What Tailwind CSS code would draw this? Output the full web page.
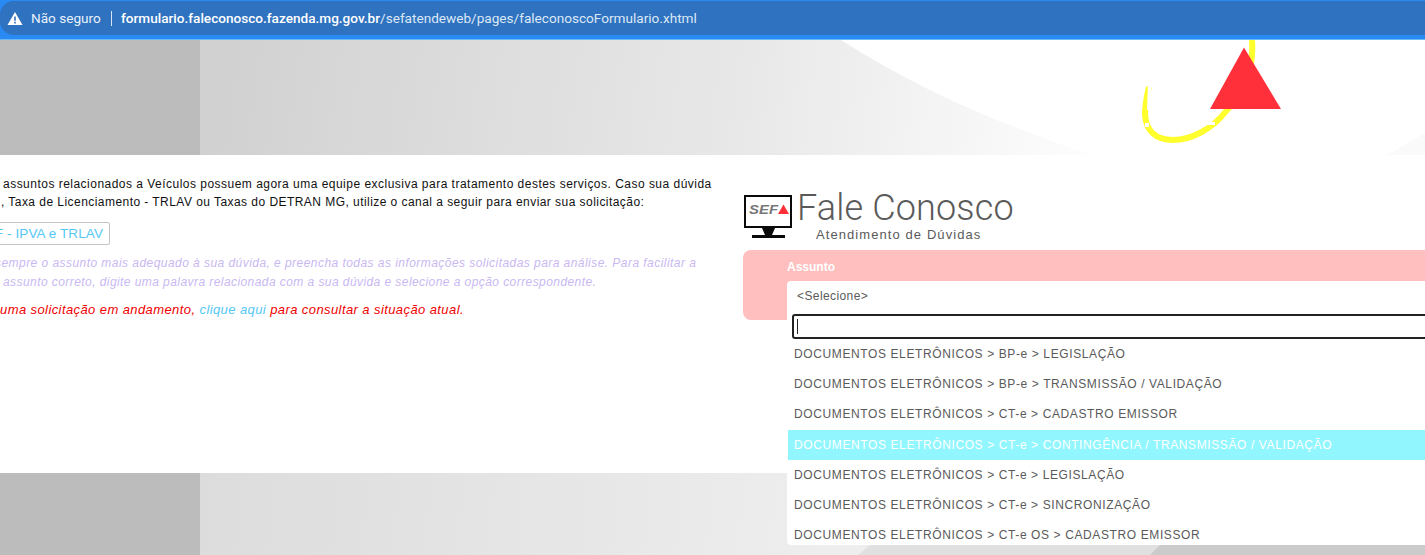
<!DOCTYPE html>
<html lang="pt-BR">

<head>
    <meta charset="UTF-8">
    <title>Fale Conosco</title>
    <script src="https://cdn.jsdelivr.net/npm/@tailwindcss/browser@4"></script>
</head>

<body class="bg-white">
    <div class="h-[555px] w-[1425px] overflow-hidden font-['Liberation_Sans',sans-serif]">
        <!-- browser address bar -->
        <div class="h-[40px] bg-[#2a8af3] pt-px border-b border-[#6bb8f5]">
            <div class="flex h-[34px] items-center rounded-l-[14px] bg-[#2f72bf] pl-[7px] text-[13.6px] text-white font-['Roboto',sans-serif]">
                <svg class="h-[15px] w-[16px]" viewBox="0 0 16 15"><path fill="#fff" d="M8 1 15.5 14H.5Z"/><path fill="#2f72bf" d="M7.2 5.4h1.6v4.4H7.2zM7.2 10.8h1.6v1.6H7.2z"/></svg>
                <span class="ml-2 w-[72px] whitespace-nowrap text-[#e8f1fb]">Não seguro</span>
                <span class="ml-[8px] h-[15px] w-px bg-white/80"></span>
                <span class="ml-[9px] font-medium">formulario.faleconosco.fazenda.mg.gov.br<span class="font-normal text-[#dce8f6]">/sefatendeweb/pages/faleconoscoFormulario.xhtml</span></span>
            </div>
        </div>

        <!-- faixa superior -->
        <div class="flex h-[115px]">
            <div class="w-[200px] bg-[#bcbcbc]"></div>
            <svg class="h-[115px] w-[1225px]" viewBox="0 0 1225 115">
                <defs>
                    <linearGradient id="topo" x1="0" y1="0" x2="900" y2="120" gradientUnits="userSpaceOnUse">
                        <stop offset="0" stop-color="#d0d0d0"/>
                        <stop offset="0.6" stop-color="#e8e8e8"/>
                        <stop offset="1" stop-color="#fefefe"/>
                    </linearGradient>
                </defs>
                <path fill="url(#topo)" d="M0 0H641C720 50 800 85 893 115H0Z"/>
                <path fill="#fafafa" d="M1225 93V115H1187Z"/>
                <path fill="none" stroke="#ffff2e" stroke-width="6" d="M1052 0C1054 28 1045 52 1027 70C1012 90 990 100 973 100C955 100 946 90 945 75C945 65 947 55 949 47"/>
                <path fill="#fff" d="M948 44h4l-3 26h-2zM945 83h4v4h-4zM1005 82h10v3h-10z"/>
                <path fill="#ff303a" d="M1044 7.5 1081 69H1010Z"/>
            </svg>
        </div>

        <!-- faixa branca -->
        <div class="flex h-[318px] bg-white">
            <div class="w-[743px] shrink-0 overflow-hidden pt-[20px] text-[12px] leading-[18px] tracking-[0.48px] whitespace-nowrap text-[#111]">
                <p class="ml-[3px]">assuntos relacionados a Veículos possuem agora uma equipe exclusiva para tratamento destes serviços. Caso sua dúvida</p>
                <p class="ml-[1px] tracking-[0.45px]">, Taxa de Licenciamento - TRLAV ou Taxas do DETRAN MG, utilize o canal a seguir para enviar sua solicitação:</p>
                <div class="mt-[11px] -ml-[20px] flex h-[23px] w-[130px] items-center justify-end rounded-[2px] border border-[#c4c4c4] pr-[6px] text-[13.5px] tracking-[0.1px] text-[#55c8f5]">F - IPVA e TRLAV</div>
                <p class="mt-[9px] -ml-[5px] text-[12px] leading-[19px] tracking-[0.45px] italic text-[#c9b8f2]">sempre o assunto mais adequado à sua dúvida, e preencha todas as informações solicitadas para análise. Para facilitar a</p>
                <p class="ml-[3px] leading-[19px] tracking-[0.43px] italic text-[#c9b8f2]">assunto correto, digite uma palavra relacionada com a sua dúvida e selecione a opção correspondente.</p>
                <p class="mt-[9px] text-[13px] tracking-[0.41px] italic font-medium text-[#f00000]">uma solicitação em andamento, <span class="text-[#55c8f5]">clique aqui</span> para consultar a situação atual.</p>
            </div>

            <div class="min-w-0 flex-1 pt-[38px]">
                <div class="flex h-[57px]">
                    <svg class="mt-[2px] ml-px h-[43px] w-[50px] shrink-0" viewBox="0 0 50 43">
                        <path fill="#0a0a0a" d="M0 0H48V33H0Z"/>
                        <path fill="#fff" d="M2 2H46V31H2Z"/>
                        <text x="5" y="18.5" font-family="Liberation Sans" font-size="12" font-weight="700" font-style="italic" fill="#777" textLength="29" lengthAdjust="spacingAndGlyphs">SEF</text>
                        <path fill="#ff3038" d="M39.5 9.5 45 19H34Z"/>
                        <path fill="#0a0a0a" d="M18 33H31L28 40H41V43H8V40H21Z"/>
                    </svg>
                    <div class="ml-[3px] text-[#5a5a5a]">
                        <div class="text-[36px] leading-[30px] tracking-[0.15px] font-['Roboto',sans-serif] font-light">Fale Conosco</div>
                        <div class="mt-[4px] ml-[19px] text-[13px] leading-[16px] tracking-[1.08px]">Atendimento de Dúvidas</div>
                    </div>
                </div>

                <div class="relative h-[70px] rounded-l-[8px] bg-[#ffbfbf] pt-[9px] pl-[44px] text-[12px] leading-[16px] font-bold text-white">
                    Assunto
                    <!-- lista aberta do select -->
                    <div class="absolute top-[31px] left-[44px] h-[264px] w-[700px] overflow-hidden rounded-[4px] bg-white font-normal text-[#5a5a5a]">
                        <div class="flex h-[29px] items-center pl-[10px] tracking-[0.4px]">&lt;Selecione&gt;</div>
                        <div class="mt-[4px] ml-[5px] flex h-[25px] items-center rounded-[3px] border-2 border-[#222] pl-[3px]"><span class="h-[15px] w-px bg-[#222]"></span></div>
                        <ul class="tracking-[0.61px]">
                            <li class="flex h-[30.2px] items-center pl-[7px]">DOCUMENTOS ELETRÔNICOS &gt; BP-e &gt; LEGISLAÇÃO</li>
                            <li class="flex h-[30.2px] items-center pl-[7px]">DOCUMENTOS ELETRÔNICOS &gt; BP-e &gt; TRANSMISSÃO / VALIDAÇÃO</li>
                            <li class="flex h-[30.2px] items-center pl-[7px]">DOCUMENTOS ELETRÔNICOS &gt; CT-e &gt; CADASTRO EMISSOR</li>
                            <li class="ml-px flex h-[30.2px] items-center bg-[#92f6ff] pl-[6px] text-white">DOCUMENTOS ELETRÔNICOS &gt; CT-e &gt; CONTINGÊNCIA / TRANSMISSÃO / VALIDAÇÃO</li>
                            <li class="flex h-[30.2px] items-center pl-[7px]">DOCUMENTOS ELETRÔNICOS &gt; CT-e &gt; LEGISLAÇÃO</li>
                            <li class="flex h-[30.2px] items-center pl-[7px]">DOCUMENTOS ELETRÔNICOS &gt; CT-e &gt; SINCRONIZAÇÃO</li>
                            <li class="flex h-[30.2px] items-center pl-[7px]">DOCUMENTOS ELETRÔNICOS &gt; CT-e OS &gt; CADASTRO EMISSOR</li>
                        </ul>
                    </div>
                </div>
            </div>
        </div>

        <!-- faixa inferior -->
        <div class="flex h-[82px]">
            <div class="w-[200px] bg-[#bcbcbc]"></div>
            <svg class="h-[82px] w-[1225px]" viewBox="0 0 1225 82">
                <defs>
                    <linearGradient id="rodape" x1="0" y1="0" x2="640" y2="60" gradientUnits="userSpaceOnUse">
                        <stop offset="0" stop-color="#dcdcdc"/>
                        <stop offset="1" stop-color="#eeeeee"/>
                    </linearGradient>
                </defs>
                <path fill="url(#rodape)" d="M0 0H1225V82H0Z"/>
                <path fill="#e0e0e0" d="M670 72H1225V82H658Z"/>
                <path fill="#cbcbcb" d="M960 72H1225V82H950Z"/>
            </svg>
        </div>
    </div>
</body>

</html>
